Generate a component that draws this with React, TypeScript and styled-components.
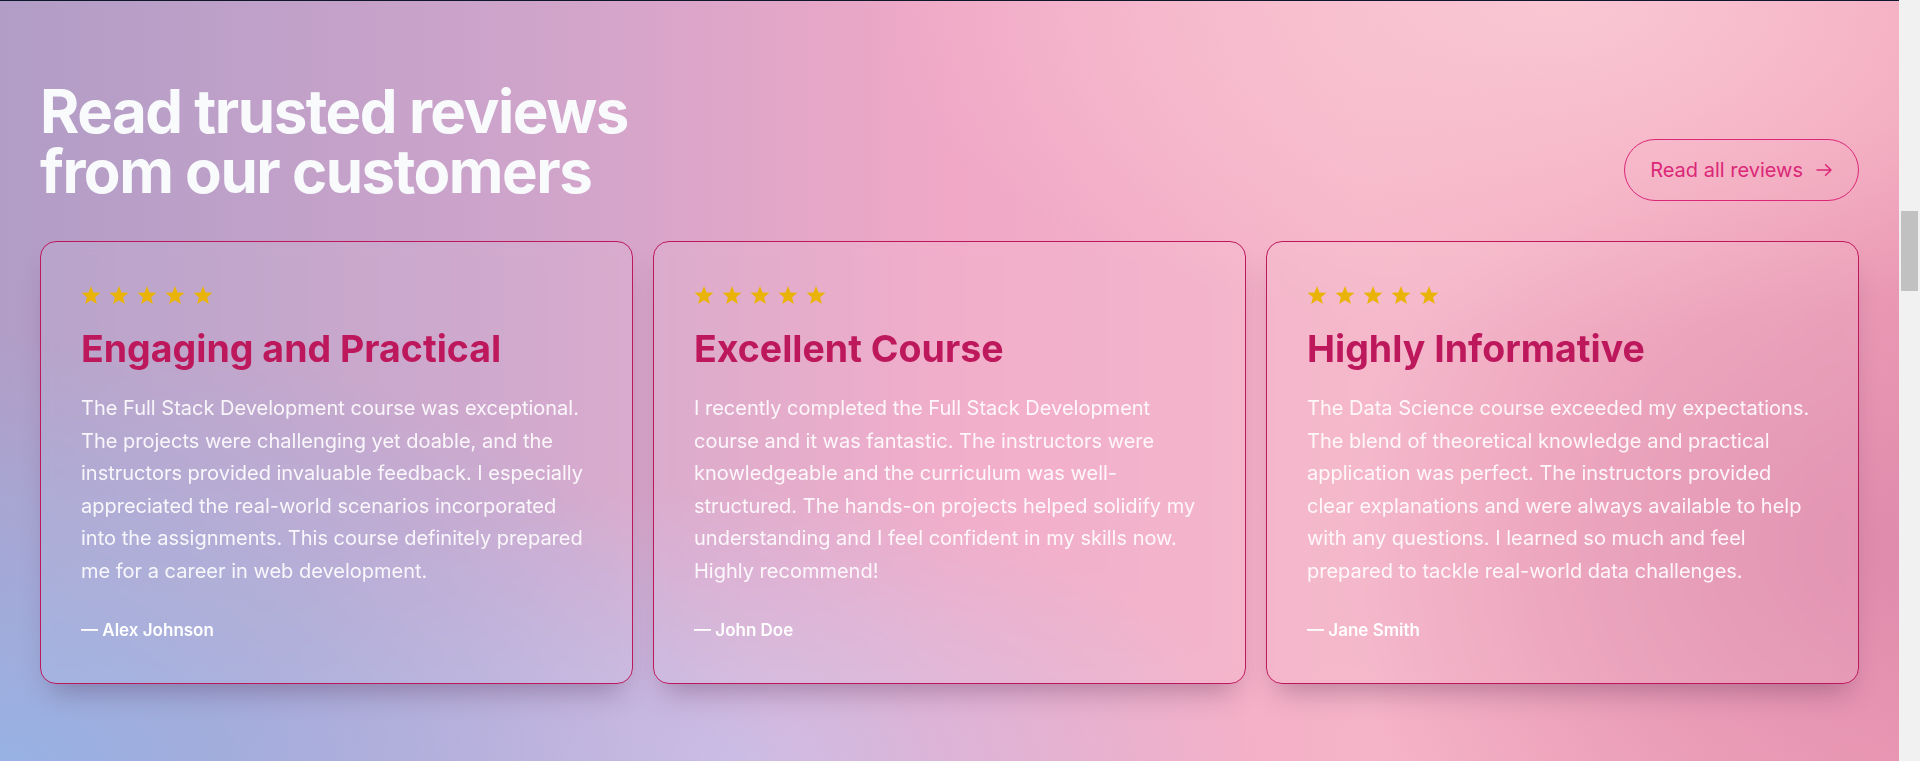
import React from "react";
import styled, { createGlobalStyle } from "styled-components";

const GlobalStyle = createGlobalStyle`
  html {
    background: #f1f1f1;
  }
  html, body {
    margin: 0;
    padding: 0;
  }
  body {
    margin-right: 21px;
    font-family: Inter, "Noto Sans", "Liberation Sans", sans-serif;
    -webkit-font-smoothing: antialiased;
  }
  * {
    box-sizing: border-box;
  }
`;

const ScrollThumb = styled.div`
  position: fixed;
  top: 211px;
  right: 2px;
  width: 17px;
  height: 80px;
  background: #c1c1c1;
`;

const Section = styled.section`
  height: 761px;
  border-top: 1px solid #0f172a;
  padding: 80px 40px 0;
  overflow: hidden;
  background:
    radial-gradient(55% 75% at 0% 100%, rgba(152, 178, 228, 1) 0%, rgba(152, 178, 228, 0) 75%),
    radial-gradient(35% 45% at 38% 100%, rgba(204, 192, 232, 0.9) 0%, rgba(204, 192, 232, 0) 80%),
    radial-gradient(45% 55% at 82% 0%, rgba(250, 200, 212, 0.95) 0%, rgba(250, 200, 212, 0) 80%),
    radial-gradient(40% 75% at 100% 72%, rgba(220, 136, 170, 0.85) 0%, rgba(220, 136, 170, 0) 75%),
    linear-gradient(90deg, #b19dc6 0%, #cfa4cb 28%, #f0a8c6 50%, #f5b4c8 72%, #f0a0b8 100%);
`;

const Header = styled.div`
  display: flex;
  justify-content: space-between;
  align-items: flex-end;
  margin-bottom: 40px;
`;

const Heading = styled.h2`
  margin: 0;
  font-size: 60px;
  line-height: 60px;
  font-weight: 700;
  letter-spacing: -0.025em;
  color: #f8fafc;
`;

const OutlineButton = styled.a`
  display: inline-flex;
  align-items: center;
  gap: 13px;
  padding: 16px 26px 16px 25px;
  border: 1px solid #db2777;
  border-radius: 9999px;
  color: #db2777;
  font-size: 20px;
  line-height: 28px;
  font-weight: 400;
  text-decoration: none;
  cursor: pointer;
`;

const Grid = styled.div`
  display: grid;
  grid-template-columns: repeat(3, 1fr);
  gap: 20px;
`;

const Card = styled.article`
  display: flex;
  flex-direction: column;
  border: 1px solid #be185d;
  border-radius: 16px;
  padding: 43px 40px 39px;
  background: rgba(255, 255, 255, 0.07);
  backdrop-filter: blur(6px);
  box-shadow: 0 18px 28px -12px rgba(70, 30, 70, 0.35);
`;

const Stars = styled.div`
  display: flex;
  gap: 8px;
  height: 20px;
  margin-bottom: 24px;
`;

const CardTitle = styled.h3`
  margin: 0 0 23px;
  font-size: 37.5px;
  line-height: 40px;
  font-weight: 700;
  color: #be185d;
`;

const Body = styled.p`
  margin: 0;
  font-size: 20px;
  line-height: 32.5px;
  color: rgba(255, 255, 255, 0.9);
`;

const Author = styled.p`
  margin: 29px 0 0;
  font-size: 17px;
  line-height: 28px;
  font-weight: 600;
  color: #ffffff;
`;

const starPoints = (() => {
  const cx = 10;
  const cy = 10.95;
  const R = 10;
  const r = 4.3;
  const pts: string[] = [];
  for (let i = 0; i < 10; i++) {
    const rad = i % 2 === 0 ? R : r;
    const a = (-90 + i * 36) * (Math.PI / 180);
    pts.push(`${(cx + rad * Math.cos(a)).toFixed(2)},${(cy + rad * Math.sin(a)).toFixed(2)}`);
  }
  return pts.join(" ");
})();

const Star = () => (
  <svg width="20" height="20" viewBox="0 0 20 20" aria-hidden="true">
    <polygon points={starPoints} fill="#eab308" />
  </svg>
);

const Arrow = () => (
  <svg width="16" height="12" viewBox="0 0 16 12" fill="none" aria-hidden="true">
    <path
      d="M1 6h14M9.6 0.8 15 6l-5.4 5.2"
      stroke="#db2777"
      strokeWidth="1.5"
      strokeLinecap="round"
      strokeLinejoin="round"
    />
  </svg>
);

type Review = { title: string; text: string; author: string };

const reviews: Review[] = [
  {
    title: "Engaging and Practical",
    text:
      "The Full Stack Development course was exceptional. The projects were challenging yet doable, and the instructors provided invaluable feedback. I especially appreciated the real-world scenarios incorporated into the assignments. This course definitely prepared me for a career in web development.",
    author: "Alex Johnson",
  },
  {
    title: "Excellent Course",
    text:
      "I recently completed the Full Stack Development course and it was fantastic. The instructors were knowledgeable and the curriculum was well-structured. The hands-on projects helped solidify my understanding and I feel confident in my skills now. Highly recommend!",
    author: "John Doe",
  },
  {
    title: "Highly Informative",
    text:
      "The Data Science course exceeded my expectations. The blend of theoretical knowledge and practical application was perfect. The instructors provided clear explanations and were always available to help with any questions. I learned so much and feel prepared to tackle real-world data challenges.",
    author: "Jane Smith",
  },
];

export default function App() {
  return (
    <>
      <GlobalStyle />
      <Section>
        <Header>
          <Heading>
            Read trusted reviews
            <br />
            from our customers
          </Heading>
          <OutlineButton href="#reviews">
            Read all reviews
            <Arrow />
          </OutlineButton>
        </Header>
        <Grid>
          {reviews.map((r) => (
            <Card key={r.author}>
              <Stars>
                {[0, 1, 2, 3, 4].map((i) => (
                  <Star key={i} />
                ))}
              </Stars>
              <CardTitle>{r.title}</CardTitle>
              <Body>{r.text}</Body>
              <Author>— {r.author}</Author>
            </Card>
          ))}
        </Grid>
      </Section>
      <ScrollThumb />
    </>
  );
}
